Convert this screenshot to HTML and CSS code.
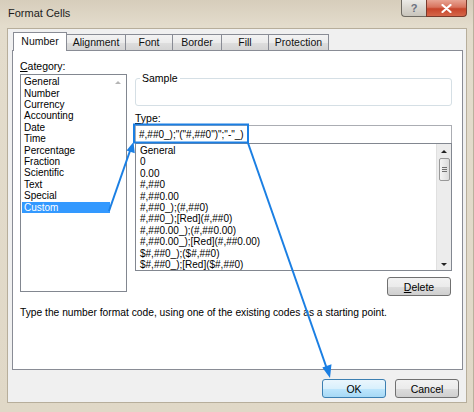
FILE: index.html
```html
<!DOCTYPE html>
<html lang="en">
<head>
  <meta charset="UTF-8">
  <title>Format Cells</title>
  <link rel="stylesheet" href="styles.css">
</head>
<body>
  <div class="window">
    <div class="titlebar">
      <span class="title">Format Cells</span>
      <div class="caption-btns">
        <span class="cap help">?</span>
        <span class="cap close">
          <svg width="11" height="9" viewBox="0 0 11 9"><path d="M1.5 1 L9.5 8 M9.5 1 L1.5 8" stroke="#fff" stroke-width="2.2" stroke-linecap="round"/></svg>
        </span>
      </div>
    </div>

    <div class="client">
      <div class="tabs">
        <div class="tab active">Number</div>
        <div class="tab">Alignment</div>
        <div class="tab">Font</div>
        <div class="tab">Border</div>
        <div class="tab">Fill</div>
        <div class="tab">Protection</div>
      </div>

      <div class="panel">
        <div class="cols">
          <div class="col-left">
            <div class="label"><u>C</u>ategory:</div>
            <div class="listbox catlist">
              <ul class="items">
                <li>General</li>
                <li>Number</li>
                <li>Currency</li>
                <li>Accounting</li>
                <li>Date</li>
                <li>Time</li>
                <li>Percentage</li>
                <li>Fraction</li>
                <li>Scientific</li>
                <li>Text</li>
                <li>Special</li>
                <li class="selected">Custom</li>
              </ul>
              <div class="vscroll disabled">
                <span class="arr up"></span>
              </div>
            </div>
          </div>

          <div class="col-right">
            <fieldset class="sample">
              <legend>Sample</legend>
            </fieldset>
            <div class="label type-label"><u>T</u>ype:</div>
            <div class="typebox">#,##0_);"("#,##0")";"-"_)</div>
            <div class="listbox fmtlist">
              <ul class="items">
                <li>General</li>
                <li>0</li>
                <li>0.00</li>
                <li>#,##0</li>
                <li>#,##0.00</li>
                <li>#,##0_);(#,##0)</li>
                <li>#,##0_);[Red](#,##0)</li>
                <li>#,##0.00_);(#,##0.00)</li>
                <li>#,##0.00_);[Red](#,##0.00)</li>
                <li>$#,##0_);($#,##0)</li>
                <li>$#,##0_);[Red]($#,##0)</li>
              </ul>
              <div class="vscroll">
                <span class="arr up"></span>
                <span class="thumb"><i></i><i></i><i></i></span>
                <span class="arr down"></span>
              </div>
            </div>
            <div class="actions">
              <button class="btn"><u>D</u>elete</button>
            </div>
          </div>
        </div>
        <p class="hint">Type the number format code, using one of the existing codes as a starting point.</p>
      </div>

      <div class="footer">
        <button class="btn default">OK</button>
        <button class="btn">Cancel</button>
      </div>
    </div>

    <!-- callout arrows drawn over the dialog -->
    <svg class="annot" width="474" height="412" viewBox="0 0 474 412">
      <rect x="134" y="124.5" width="114" height="18" fill="none" stroke="#1b7fe3" stroke-width="2"/>
      <line x1="109" y1="211" x2="131" y2="148" stroke="#1b7fe3" stroke-width="2"/>
      <polygon points="133.5,142 126.5,150.5 134.8,153.2" fill="#1b7fe3"/>
      <line x1="248" y1="143" x2="327" y2="369" stroke="#1b7fe3" stroke-width="2"/>
      <polygon points="330,378 322.3,367.5 331.5,364.3" fill="#1b7fe3"/>
    </svg>
  </div>
</body>
</html>
```

FILE: styles.css
```css
* {
  box-sizing: border-box;
}

body {
  margin: 0;
  font-family: "Liberation Sans", Arial, sans-serif;
  font-size: 10px;
  color: #000;
}

.window {
  position: relative;
  width: 474px;
  height: 412px;
  padding: 0 6px 9px 7px;
  background: linear-gradient(180deg, #d6cdbb 0, #e3dccc 26px, #e0d8c7 100%);
  border-right: 1px solid #b9b09d;
  display: flex;
  flex-direction: column;
}

.titlebar {
  height: 28px;
  display: flex;
  align-items: flex-start;
}

.title {
  padding: 6px 0 0 1px;
  font-size: 11px;
  line-height: 14px;
  color: #1c1c1c;
}

.caption-btns {
  margin-left: auto;
  display: flex;
}

.cap {
  height: 17px;
  display: flex;
  align-items: center;
  justify-content: center;
  border: 1px solid #6e6a62;
  border-top: none;
}

.help {
  width: 25px;
  border-right: none;
  border-radius: 0 0 0 4px;
  background: linear-gradient(180deg, #ecebe7 0%, #d9d6cf 50%, #c9c5bc 100%);
  color: #6a7180;
  font-weight: bold;
  font-size: 11px;
}

.close {
  width: 41px;
  border-radius: 0 0 4px 0;
  border-color: #7a3a2c;
  background: linear-gradient(180deg, #e8a493 0%, #d8735d 45%, #c7452b 55%, #d5664a 100%);
}

.client {
  flex: 1;
  background: #f0f0f0;
  border: 1px solid #b7ae9b;
  padding: 3px 3px 0 4px;
}

.tabs {
  display: flex;
  align-items: flex-end;
  height: 19px;
  margin: 0 0 -1px 1px;
}

.tab {
  height: 16px;
  margin-bottom: 1px;
  margin-left: -1px;
  border: 1px solid #898c95;
  border-bottom: none;
  background: linear-gradient(180deg, #f3f3f3 0%, #ebebeb 50%, #dedede 51%, #d4d4d4 100%);
  text-align: center;
  font-size: 10.5px;
  line-height: 14px;
  color: #111;
}

.tab:nth-child(1) { width: 54px; margin-left: 0; }
.tab:nth-child(2) { width: 60px; }
.tab:nth-child(3) { width: 48px; }
.tab:nth-child(4) { width: 50px; }
.tab:nth-child(5) { width: 48px; }
.tab:nth-child(6) { width: 61px; }

.tab.active {
  height: 19px;
  margin-bottom: 0;
  background: #fff;
  position: relative;
  z-index: 1;
  line-height: 17px;
}

.panel {
  height: 320px;
  background: #fff;
  border: 1px solid #898c95;
  padding: 8px 10px 0 7px;
}

.cols {
  display: flex;
  gap: 8px;
}

.col-left {
  width: 107px;
}

.col-right {
  flex: 1;
  display: flex;
  flex-direction: column;
}

.label {
  height: 15px;
  line-height: 14px;
  font-size: 10.5px;
}

.listbox {
  display: flex;
  border: 1px solid #828790;
  background: #fff;
}

.items {
  list-style: none;
  margin: 0;
  flex: 1;
}

.items li {
  height: 11.4px;
  line-height: 11.4px;
  padding-left: 2px;
  white-space: nowrap;
}

.catlist {
  height: 218px;
}

.catlist .items {
  padding: 1.3px 0 0 1px;
}

.catlist .selected {
  background: #3399ff;
  color: #fff;
}

.vscroll {
  width: 15px;
  display: flex;
  flex-direction: column;
  align-items: center;
  background: #ececec;
  border-left: 1px solid #e0e0e0;
  padding: 6px 0 4px;
}

.vscroll.disabled {
  width: 16px;
  background: #fff;
  border-left: none;
}

.arr {
  width: 0;
  height: 0;
  border-left: 3px solid transparent;
  border-right: 3px solid transparent;
}

.arr.up {
  border-bottom: 3px solid #222;
}

.arr.down {
  margin-top: auto;
  border-top: 3px solid #222;
}

.disabled .arr.up {
  border-bottom-color: #b5b5b5;
}

.thumb {
  width: 11px;
  height: 23px;
  margin-top: 5px;
  border: 1px solid #989898;
  border-radius: 2px;
  background: linear-gradient(90deg, #f4f4f4, #dcdcdc);
  display: flex;
  flex-direction: column;
  align-items: center;
  justify-content: center;
  gap: 1px;
}

.thumb i {
  width: 5px;
  height: 1px;
  background: #707070;
}

.sample {
  margin: 13px 0 0;
  height: 34px;
  padding: 0 4px;
  border: 1px solid #d5dfe5;
  border-radius: 3px;
}

.sample legend {
  padding: 0 2px;
  line-height: 12px;
  font-size: 10.5px;
}

.type-label {
  margin-top: 5px;
  height: 14px;
}

.typebox {
  height: 18px;
  border: 1px solid #abadb3;
  border-bottom: none;
  padding-left: 3px;
  line-height: 17px;
  white-space: nowrap;
}

.fmtlist {
  height: 128px;
}

.fmtlist .items {
  padding: 1px 0 0 2px;
}

.actions {
  display: flex;
  justify-content: flex-end;
  margin: 6px 1px 0 0;
}

.btn {
  width: 64px;
  height: 19px;
  padding: 0;
  font: inherit;
  font-size: 10.5px;
  color: #000;
  border: 1px solid #707070;
  border-radius: 3px;
  background: linear-gradient(180deg, #f2f2f2 0%, #ebebeb 50%, #dddddd 51%, #cfcfcf 100%);
}

.btn.default {
  border-color: #3c7fb1;
  background: linear-gradient(180deg, #eaf6fd 0%, #d9f0fc 50%, #bee6fd 51%, #a7d9f5 100%);
}

.hint {
  margin: 10px 0 0;
  line-height: 14px;
  font-size: 10.25px;
}

.footer {
  display: flex;
  justify-content: flex-end;
  gap: 9px;
  margin-top: 9px;
  padding-right: 4px;
}

.annot {
  position: absolute;
  top: 0;
  left: 0;
  pointer-events: none;
}
```
